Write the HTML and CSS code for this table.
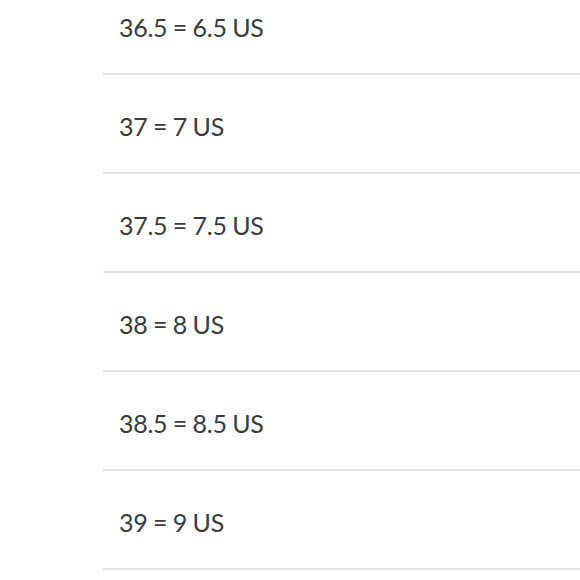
FILE: index.html
```html
<!DOCTYPE html>
<html>
<head>
<meta charset="utf-8">
<link rel="stylesheet" href="styles.css">
</head>
<body>
<ul class="size-list">
  <li class="size-row">36.5 = 6.5 US</li>
  <li class="size-row">37 = 7 US</li>
  <li class="size-row">37.5 = 7.5 US</li>
  <li class="size-row">38 = 8 US</li>
  <li class="size-row">38.5 = 8.5 US</li>
  <li class="size-row">39 = 9 US</li>
</ul>
</body>
</html>
```
FILE: styles.css
```css
html, body {
  margin: 0;
  padding: 0;
  background: #ffffff;
}
body {
  overflow: hidden;
}
.size-list {
  list-style: none;
  margin: -24px 0 0 103px;
  padding: 0;
}
.size-row {
  height: 93px;
  display: flex;
  align-items: center;
  padding: 4px 0 0 16px;
  border-bottom: 2px solid #e3e3e3;
  font-family: Lato, "Open Sans", sans-serif;
  font-size: 25px;
  color: #3b3b3b;
  letter-spacing: -0.3px;
  word-spacing: -0.5px;
}
```
